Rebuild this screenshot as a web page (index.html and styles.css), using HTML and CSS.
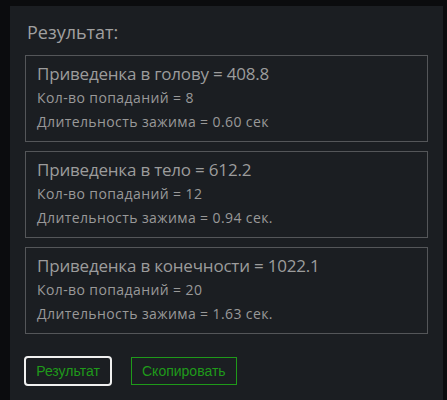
FILE: index.html
```html
<!DOCTYPE html>
<html lang="ru">
<head>
  <meta charset="UTF-8">
  <title>Результат</title>
  <link rel="stylesheet" href="styles.css">
</head>
<body>
  <div class="panel">
    <h2 class="title">Результат:</h2>
    <div class="result">
      <div class="result-head">Приведенка в голову = 408.8</div>
      <div class="result-line">Кол-во попаданий = 8</div>
      <div class="result-line">Длительность зажима = 0.60 сек</div>
    </div>
    <div class="result">
      <div class="result-head">Приведенка в тело = 612.2</div>
      <div class="result-line">Кол-во попаданий = 12</div>
      <div class="result-line">Длительность зажима = 0.94 сек.</div>
    </div>
    <div class="result">
      <div class="result-head">Приведенка в конечности = 1022.1</div>
      <div class="result-line">Кол-во попаданий = 20</div>
      <div class="result-line">Длительность зажима = 1.63 сек.</div>
    </div>
    <div class="actions">
      <button class="btn btn-active">Результат</button>
      <button class="btn">Скопировать</button>
    </div>
  </div>
</body>
</html>
```

FILE: styles.css
```css
html, body {
  height: 100%;
}
body {
  margin: 0;
  padding: 6px 4px 0 10px;
  box-sizing: border-box;
  background-color: #0b0c0e;
  background-image:
    radial-gradient(circle, #3a3f48 0.8px, transparent 1.2px),
    radial-gradient(circle, #2c3038 0.8px, transparent 1.2px);
  background-size: 37px 53px, 61px 29px;
  background-position: 3px 11px, 19px 4px;
  font-family: 'Open Sans', 'Noto Sans', sans-serif;
  overflow: hidden;
}
.panel {
  box-sizing: border-box;
  height: 100%;
  background: #1b1e22;
  padding: 13px 15px 0 15px;
}
.title {
  margin: 0 0 10px 2px;
  font-size: 18px;
  font-weight: 400;
  line-height: 26px;
  color: #a0a0a0;
}
.result {
  border: 1px solid #545659;
  padding: 6px 11px 5px 11px;
  margin-bottom: 9px;
  height: 74px;
}
.result-head {
  font-size: 17px;
  line-height: 24px;
  letter-spacing: -0.2px;
  color: #9c9c9c;
}
.result-line {
  font-size: 14px;
  line-height: 24px;
  letter-spacing: 0.4px;
  color: #999;
}
.actions {
  display: flex;
  align-items: center;
  gap: 19px;
  margin: 22px 0 0 -1px;
}
.btn {
  font-family: 'Liberation Sans', Arial, sans-serif;
  font-size: 14px;
  color: #1f9a1a;
  background: #1b1e22;
  border: 1px solid #1f9a1a;
  height: 28px;
  padding: 0 10px;
}
.btn-active {
  border: 2px solid #f0f0f0;
  border-radius: 4px;
  height: 30px;
  width: 88px;
}
```
